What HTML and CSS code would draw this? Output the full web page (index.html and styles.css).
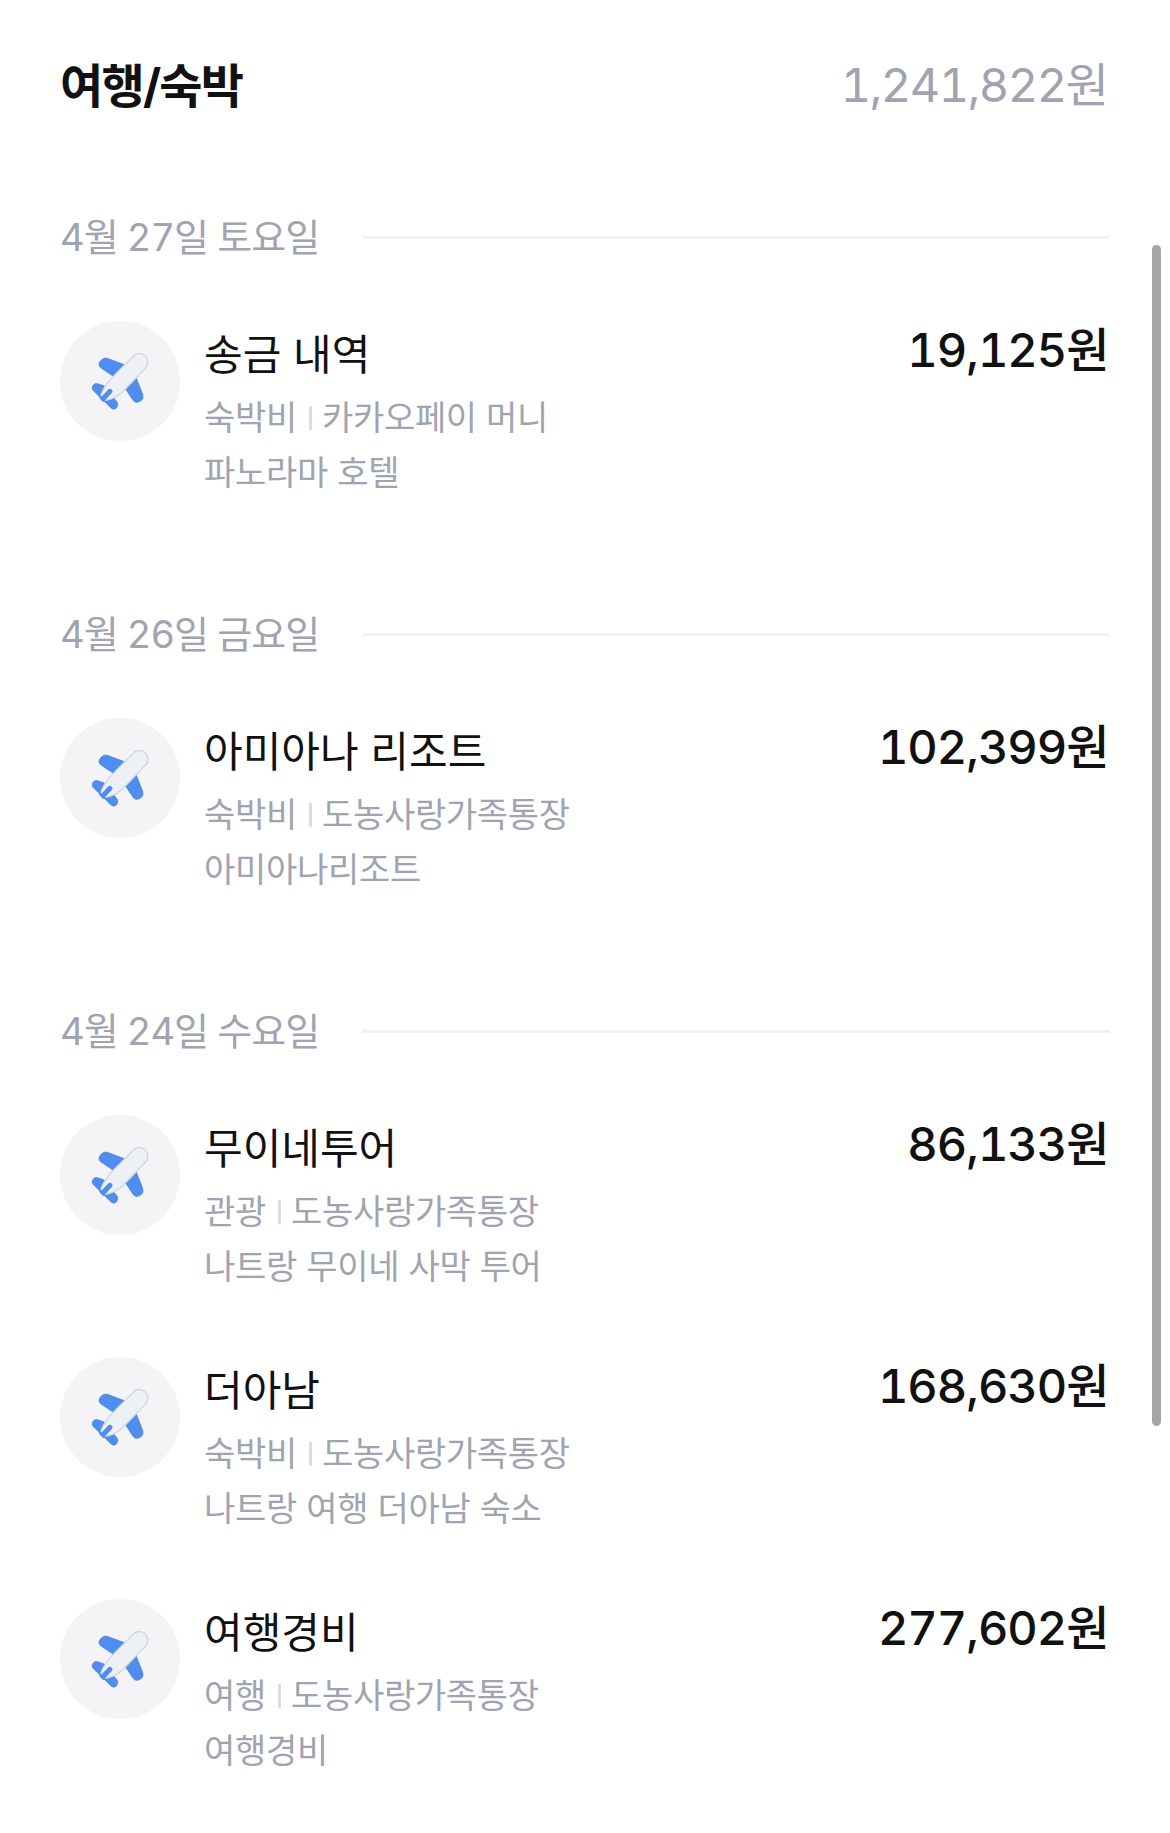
FILE: index.html
```html
<!DOCTYPE html>
<html lang="ko">
<head>
<meta charset="utf-8">
<title>여행/숙박</title>
<link rel="stylesheet" href="styles.css">
</head>
<body>
<svg class="defs" aria-hidden="true">
<symbol id="plane" viewBox="30 32 360 360">
<g fill="#4f8df0" stroke="#477fd8" stroke-width="2">
<path d="M226 164 L172 144 Q163 141 155 148 Q145 157 147 165 Q148 170 154 174 L192 199 Z"/>
<path d="M226 235 L249 270 Q254 277 262 276 Q278 272 279 261 L278 252 L258 201 Z"/>
<path d="M163 227 L143 220 Q134 217 128 226 Q124 235 131 242 L184 294 Q192 300 200 292 Q206 284 202 276 L188 259 Z"/>
</g>
<path d="M251 136 C262 126 278 128 287 138 C296 148 296 164 286 174 L218 244 Q196 265 163 271 Q149 270 152 257 Q158 235 181 207 Z" fill="#edf1f4" stroke="#d0d8de" stroke-width="4"/>
<path d="M161 263 L180 243" fill="none" stroke="#4f8df0" stroke-width="15" stroke-linecap="round"/>
<path d="M148 252 L170 275 L158 274 L148 263 Z" fill="#4f8df0"/>
</symbol>
</svg>
<main class="page">
<header class="summary"><h1 class="category">여행/숙박</h1><span class="total"><span class="num">1,241,822</span>원</span></header>
<section class="day"><h2 class="date"><span class="date-text">4월 27일 토요일</span></h2>
<article class="item"><svg class="icon"><use href="#plane"/></svg><div class="info"><h3 class="name">송금 내역</h3><p class="meta">숙박비<i class="bar"></i>카카오페이 머니</p><p class="memo">파노라마 호텔</p></div><span class="amount"><span class="num">19,125</span>원</span></article>
</section>
<section class="day"><h2 class="date"><span class="date-text">4월 26일 금요일</span></h2>
<article class="item"><svg class="icon"><use href="#plane"/></svg><div class="info"><h3 class="name">아미아나 리조트</h3><p class="meta">숙박비<i class="bar"></i>도농사랑가족통장</p><p class="memo">아미아나리조트</p></div><span class="amount"><span class="num">102,399</span>원</span></article>
</section>
<section class="day"><h2 class="date"><span class="date-text">4월 24일 수요일</span></h2>
<article class="item"><svg class="icon"><use href="#plane"/></svg><div class="info"><h3 class="name">무이네투어</h3><p class="meta">관광<i class="bar"></i>도농사랑가족통장</p><p class="memo">나트랑 무이네 사막 투어</p></div><span class="amount"><span class="num">86,133</span>원</span></article>
<article class="item"><svg class="icon"><use href="#plane"/></svg><div class="info"><h3 class="name">더아남</h3><p class="meta">숙박비<i class="bar"></i>도농사랑가족통장</p><p class="memo">나트랑 여행 더아남 숙소</p></div><span class="amount"><span class="num">168,630</span>원</span></article>
<article class="item"><svg class="icon"><use href="#plane"/></svg><div class="info"><h3 class="name">여행경비</h3><p class="meta">여행<i class="bar"></i>도농사랑가족통장</p><p class="memo">여행경비</p></div><span class="amount"><span class="num">277,602</span>원</span></article>
</section>
</main>
<div class="scrollbar"></div>
</body>
</html>
```
FILE: styles.css
```css
* { box-sizing: border-box; margin: 0; padding: 0; }
html { overflow: hidden; }
body { width: 1170px; height: 1833px; overflow: hidden; background: #fff; color: #111; font-family: Inter, "Noto Sans CJK KR", sans-serif; }
.defs { position: absolute; width: 0; height: 0; }
.page { padding: 50px 60px 0; }
.summary { display: flex; justify-content: space-between; height: 72px; line-height: 71px; }
.category { font-size: 47px; font-weight: 700; letter-spacing: -1.8px; }
.total { color: #a0a3b1; font-size: 47px; letter-spacing: -1px; line-height: 69px; padding-right: 2px; }
.num { letter-spacing: -1px; font-variant-numeric: tabular-nums; }
.total .num { letter-spacing: -1.5px; }
.day { padding-top: 84px; height: 397px; }
.day:first-of-type { margin-top: 2px; }
.date { display: flex; align-items: center; height: 60px; font-size: 38px; font-weight: 400; letter-spacing: -1px; color: #a0a3b1; white-space: nowrap; font-variant-numeric: tabular-nums; }
.date-text { padding-bottom: 7px; }
.date::after { content: ""; width: 748px; height: 3px; margin-bottom: 2px; background: #f2f2f5; margin-left: auto; }
.item { display: flex; height: 242px; padding-top: 53px; }
.icon { flex: none; width: 120px; height: 120px; border-radius: 50%; background: #f4f4f7; margin-right: 24px; }
.info { flex: 1; white-space: nowrap; padding-top: 2px; }
.name { font-size: 42px; font-weight: 400; line-height: 64px; letter-spacing: 0; }
.meta, .memo { font-size: 34px; line-height: 55px; letter-spacing: -0.3px; color: #a0a3b1; }
.meta { margin-top: 3px; }
.bar { display: inline-block; width: 3px; height: 24px; background: #d9dde4; margin: 0 10px 0 12px; }
.amount { font-size: 47px; font-weight: 500; line-height: 57px; letter-spacing: -1px; padding-right: 1.5px; }
.scrollbar { position: absolute; left: 1152px; top: 245px; width: 9px; height: 1181px; border-radius: 5px; background: #a6a6a6; }
```
